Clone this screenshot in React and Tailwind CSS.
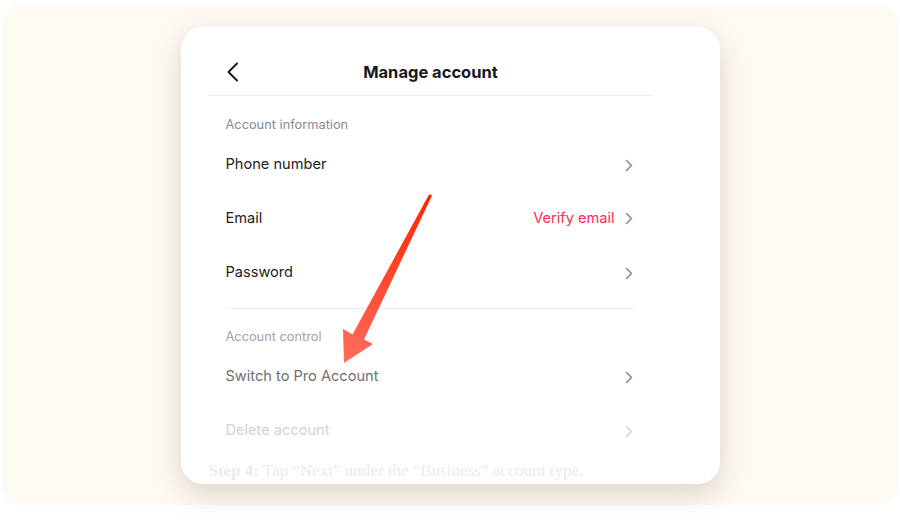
import React from "react";

const Chevron = ({ className = "" }) => (
  <svg width="8" height="13" viewBox="0 0 8 13" className={className} fill="none">
    <path d="M1.5 1.5L6.5 6.5L1.5 11.5" stroke="currentColor" strokeWidth="1.6" strokeLinecap="round" strokeLinejoin="round" />
  </svg>
);

const Row = ({ label, tone, right }) => (
  <div className="h-[54px] flex items-center justify-between">
    <span className={`text-[14.6px] ${tone}`}>{label}</span>
    <div className="flex items-center gap-[10px]">
      {right}
      <Chevron className={tone === "text-[#d2d2d2]" ? "text-[#d6d6d6]" : "text-[#8c8c8c]"} />
    </div>
  </div>
);

const App = () => {
  return (
    <div className="w-[900px] h-[520px] bg-white pt-[5px] px-[2px]" style={{ fontFamily: "Inter, 'Noto Sans', sans-serif" }}>
      <div className="h-[500px] rounded-[20px] bg-[#fdf9f3] flex justify-center pt-[22px]">
        <div className="relative w-[539px] h-[457px] bg-white rounded-[22px] overflow-hidden shadow-[0_10px_28px_rgba(110,90,60,0.22)]">
          <div className="ml-[28px] w-[444px]">
            <div className="h-[69px] pt-[22px] relative flex items-center justify-center border-b border-[#ececec]">
              <svg className="absolute left-[17px] top-[35px]" width="14" height="20" viewBox="0 0 14 20" fill="none">
                <path d="M11 1.5L2.5 10L11 18.5" stroke="#161823" strokeWidth="2" strokeLinecap="round" strokeLinejoin="round" />
              </svg>
              <span className="text-[16.5px] font-bold text-[#161823]">Manage account</span>
            </div>

            <div className="pl-[17px] pr-[20px]">
              <div className="pt-[21px] pb-[5px] text-[12.8px] leading-[16px] text-[#8a8a8a]">Account information</div>
              <Row label="Phone number" tone="text-[#222]" />
              <Row label="Email" tone="text-[#222]" right={<span className="text-[14.6px] text-[#fe2c55]">Verify email</span>} />
              <Row label="Password" tone="text-[#222]" />
              <div className="mt-[8px] mr-[-3px] border-t border-[#efefef]" />
              <div className="pt-[20px] pb-[5px] text-[12.8px] leading-[16px] text-[#a3a3a3]">Account control</div>
              <Row label="Switch to Pro Account" tone="text-[#6e6e6e]" />
              <Row label="Delete account" tone="text-[#d2d2d2]" />
            </div>
          </div>
          <div
            className="ml-[28px] mt-[3px] text-[17px] leading-[20px] text-[#ebebeb]"
            style={{ fontFamily: "'Liberation Serif', serif" }}
          >
            <span className="font-bold">Step 4:</span> Tap “Next” under the “Business” account type.
          </div>

          <svg className="absolute left-0 top-0" width="539" height="457" viewBox="0 0 539 457">
            <defs>
              <linearGradient id="arw" x1="0" y1="0" x2="0" y2="1">
                <stop offset="0" stopColor="#ff2200" />
                <stop offset="1" stopColor="#ff6e5e" />
              </linearGradient>
            </defs>
            <g transform="translate(-180,-27)">
              <path
                d="M427.5 195.5 Q429 193.5 431 195.5 L363 339.5 L372 344 L343 363 L342 329 L351.5 334.5 Z"
                fill="url(#arw)"
              />
            </g>
          </svg>
        </div>
      </div>
    </div>
  );
};

export default App;
